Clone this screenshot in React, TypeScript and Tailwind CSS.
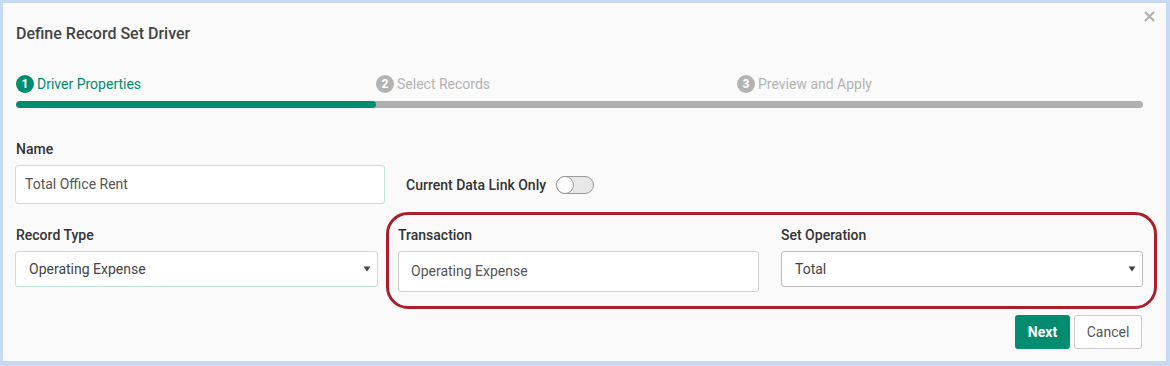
import React from "react";

function StepCircle({ n, active }: { n: number; active?: boolean }) {
  return (
    <span
      className={
        "flex h-[18px] w-[18px] items-center justify-center rounded-full text-[12px] font-bold leading-none text-white " +
        (active ? "bg-[#008c6e]" : "bg-[#b3b3b3]")
      }
    >
      {n}
    </span>
  );
}

function Caret() {
  return (
    <svg width="8" height="6" viewBox="0 0 8 6" className="shrink-0">
      <path d="M0.5 0.5 L7.5 0.5 L4 5.5 Z" fill="#444" />
    </svg>
  );
}

export default function App() {
  return (
    <div className="h-[366px] w-[1170px] border-b-[5px] border-l-[3px] border-r-[4px] border-t-[3px] border-[#c8daf2] bg-[#fafafa] font-['Roboto',sans-serif]">
      <div className="relative pl-[12px] pr-[10px]">
        <button className="absolute right-[11px] top-[8px] flex h-[11px] w-[11px] items-center justify-center">
          <svg width="11" height="11" viewBox="0 0 11 11">
            <path d="M1 1 L10 10 M10 1 L1 10" stroke="#b0b0b0" strokeWidth="2.2" />
          </svg>
        </button>

        <div className="pt-[21px] pl-[1px] text-[16px] font-medium leading-[20px] text-[#444]">
          Define Record Set Driver
        </div>

        {/* Stepper */}
        <div className="mt-[31px] flex pl-[1px] text-[14px] leading-[18px]">
          <div className="flex w-[360px] items-center gap-[3px] text-[#008c6e]">
            <StepCircle n={1} active />
            <span>Driver Properties</span>
          </div>
          <div className="flex w-[361px] items-center gap-[3px] text-[#b3b3b3]">
            <StepCircle n={2} />
            <span>Select Records</span>
          </div>
          <div className="flex items-center gap-[3px] text-[#b3b3b3]">
            <StepCircle n={3} />
            <span>Preview and Apply</span>
          </div>
        </div>
        <div className="ml-[1px] mt-[8px] h-[7px] w-[1127px] overflow-hidden rounded-full bg-[#b0b0b0]">
          <div className="h-full w-[360px] rounded-full bg-[#008c6e]" />
        </div>

        {/* Row 1 */}
        <div className="mt-[32px] flex items-end">
          <div className="w-[370px] shrink-0">
            <div className="pl-[1px] text-[14px] font-medium leading-[18px] text-[#333]">Name</div>
            <div className="mt-[7px] flex h-[39px] items-center rounded-[3px] border border-[#bfe3d7] bg-white pl-[9px] text-[14px] text-[#555]">
              Total Office Rent
            </div>
          </div>
          <div className="mb-[10px] ml-[21px] flex items-center gap-[10px]">
            <span className="text-[14px] font-medium leading-[18px] text-[#333]">Current Data Link Only</span>
            <span className="relative h-[18px] w-[38px] rounded-full border border-[#999] bg-[#e8e8e8]">
              <span className="absolute left-[-1px] top-[-1px] h-[18px] w-[18px] rounded-full border border-[#999] bg-white" />
            </span>
          </div>
        </div>

        {/* Row 2 */}
        <div className="mt-[8px] flex items-start">
          <div className="w-[363px] shrink-0 pt-[14px]">
            <div className="pl-[1px] text-[14px] font-medium leading-[18px] text-[#333]">Record Type</div>
            <div className="mt-[7px] flex h-[36px] items-center justify-between rounded-[3px] border border-[#bfe3d7] bg-white pl-[13px] pr-[6px] text-[14px] text-[#444]">
              <span>Operating Expense</span>
              <Caret />
            </div>
          </div>
          <div className="ml-[8px] flex h-[97px] shrink-0 gap-[22px] rounded-[22px] border-[3px] border-[#ab1f2c] pl-[9px] pr-[11px] pt-[11px]">
            <div className="w-[361px] shrink-0">
              <div className="text-[14px] font-medium leading-[18px] text-[#333]">Transaction</div>
              <div className="mt-[7px] flex h-[41px] items-center rounded-[3px] border border-[#cfcfcf] bg-white pl-[12px] text-[14px] text-[#555]">
                Operating Expense
              </div>
            </div>
            <div className="w-[362px] shrink-0">
              <div className="text-[14px] font-medium leading-[18px] text-[#333]">Set Operation</div>
              <div className="mt-[7px] flex h-[36px] items-center justify-between rounded-[3px] border border-[#bcbcbc] bg-white pl-[13px] pr-[6px] text-[14px] text-[#444]">
                <span>Total</span>
                <Caret />
              </div>
            </div>
          </div>
        </div>

        {/* Buttons */}
        <div className="mt-[6px] flex justify-end gap-[4px] pr-[14px]">
          <button className="h-[34px] w-[55px] rounded-[3px] bg-[#008c6e] text-[14px] font-bold text-white">Next</button>
          <button className="h-[34px] w-[68px] rounded-[3px] border border-[#ccc] bg-white text-[14px] text-[#555]">Cancel</button>
        </div>
      </div>
    </div>
  );
}
